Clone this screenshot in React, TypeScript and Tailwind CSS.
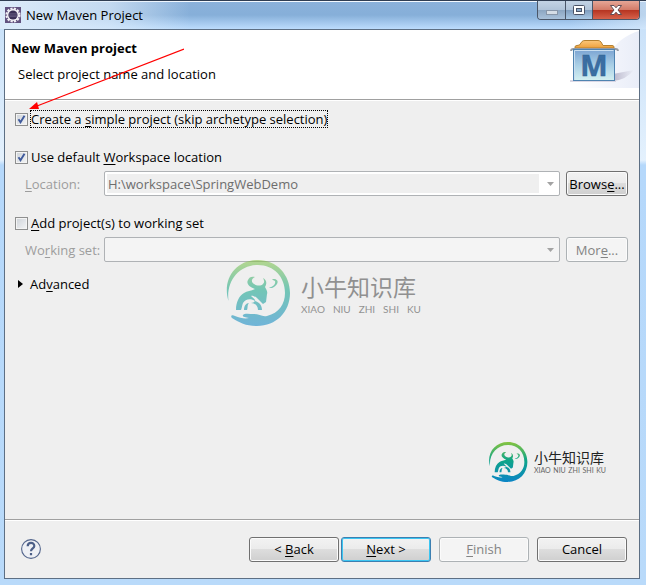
import { useState } from "react";
import type { ReactNode } from "react";

function Key({ children }: { children: ReactNode }) {
  return <span className="underline underline-offset-2">{children}</span>;
}

function EclipseIcon() {
  return (
    <svg width="16" height="16" viewBox="0 0 16 16" className="shrink-0">
      <rect width="16" height="16" fill="#62527f" />
      <circle cx="8" cy="8" r="6.5" fill="none" stroke="#f1eff5" strokeWidth="2.2" strokeDasharray="2.2 1.2" />
      <circle cx="8" cy="8" r="6" fill="#f4f2f7" />
      <circle cx="8" cy="8" r="4.6" fill="#3a2f55" />
      <path d="M4 6.800h8M3.800 8.200h8.400M4.200 9.600h7.600" stroke="#7a7196" strokeWidth="0.600" />
    </svg>
  );
}

function MavenBanner() {
  return (
    <svg width="75" height="58" viewBox="0 0 75 58" className="shrink-0">
      <defs>
        <linearGradient id="boxFill" x1="0" y1="0" x2="0" y2="1">
          <stop offset="0" stopColor="#7ba3d2" />
          <stop offset="0.5" stopColor="#a9cfe6" />
          <stop offset="1" stopColor="#d3f0f1" />
        </linearGradient>
        <linearGradient id="folderFill" x1="0" y1="0" x2="0" y2="1">
          <stop offset="0" stopColor="#fbc77a" />
          <stop offset="1" stopColor="#eda03c" />
        </linearGradient>
        <linearGradient id="bannerFill" x1="0" y1="0" x2="1" y2="0">
          <stop offset="0.1" stopColor="#ffffff" />
          <stop offset="1" stopColor="#e9edf8" />
        </linearGradient>
        <linearGradient id="shadowFill" x1="0" y1="0" x2="1" y2="0">
          <stop offset="0" stopColor="#b9b7cb" />
          <stop offset="1" stopColor="#b9b7cb" stopOpacity="0" />
        </linearGradient>
      </defs>
      <path d="M75 1C64 4 54 11 48 20C40 32 24 48 5 58H75Z" fill="url(#bannerFill)" />
      <path d="M49 51V44L70 40Q62 50 49 51Z" fill="url(#shadowFill)" />
      <path d="M6 51H52" stroke="#cfcbdc" strokeWidth="1.500" />
      <path d="M11 18V17Q11 15.500 13 15.500L15.500 15L18 11.500Q19 10.500 21 10.500H34Q36 10.500 37 12L39 15.500H48Q50 15.500 50 17V18Z" fill="url(#folderFill)" stroke="#b4802f" strokeWidth="1" />
      <path d="M7 21Q7 19 9.500 19H51.500Q54 19 54 21" fill="none" stroke="#969ba3" strokeWidth="1.800" />
      <rect x="9.500" y="19.500" width="41" height="31" fill="url(#boxFill)" stroke="#4f83b0" />
      <path d="M10.500 50V20.500H49.500" stroke="#c9def0" fill="none" />
      <text x="30" y="46" textAnchor="middle" fontFamily="Open Sans, sans-serif" fontSize="29" fontWeight="700" fill="#3a6ea3" stroke="#315f90" strokeWidth="0.500">M</text>
    </svg>
  );
}

function BullMark({ size, id }: { size: number; id: string }) {
  return (
    <svg width={size} height={size} viewBox="0 0 66 66" className="shrink-0">
      <defs>
        <linearGradient id={id} x1="0" y1="0" x2="0" y2="66" gradientUnits="userSpaceOnUse">
          <stop offset="0" stopColor="#86c440" />
          <stop offset="0.45" stopColor="#0fa587" />
          <stop offset="1" stopColor="#0a84c6" />
        </linearGradient>
      </defs>
      <g fill={`url(#${id})`}>
        <path d="M3.500 41C-3 20 10 0 33 0C52 0 65 15 65 33C65 52 51 66 32 66C21 66 15 63 7 58C5 56 7 54 10 56C15 58 20 59 24 58C20 57 17 57 18 55C19 53 25 54 29 54C34 54 37 57 42 56C54 53 60 44 60 33C60 17 49 5 33 5C14 5 1 21 3.500 41Z" />
        <path d="M11 50C11 42 14 36 19 33C22 31 26 31 30 29C24 27 21 23 23 20C24 17 27 16 30 17C26 19 26 22 29 24C32 26 36 26 38 24C40 22 39 20 38 18C42 20 42 24 40 27C41 29 43 32 42 34L41 42L38 44L33 39C30 36 27 35 26 36C29 39 31 40 30 41C26 38 20 39 18 43C17 45 17 48 16 50Z" />
        <path d="M30 41C34 42 37 45 37 50H33C33 46 30 43 26 43C28 43 29 42 30 41ZM19 50C19 46 21 43 24 43C22 45 23 48 22 50Z" />
        <path d="M44 27.500C48 27 51 24 50 21L47 19.500C51 18 54 21 52 24C50 27 47 29 44 27.500Z" />
      </g>
    </svg>
  );
}

function DropArrow() {
  return (
    <svg width="7" height="4" viewBox="0 0 7 4" className="mr-[3px] ml-2 shrink-0">
      <path d="M0 0h7L3.500 4z" fill="#a3a3a3" />
    </svg>
  );
}

const checkboxClass =
  "h-[13px] w-[13px] shrink-0 appearance-none border border-[#8e8f8f] bg-[linear-gradient(135deg,#cdd2d8,#f4f5f6)] shadow-[inset_0_0_0_1px_#f4f4f4] checked:bg-[url('data:image/svg+xml,%3Csvg%20xmlns=%22http://www.w3.org/2000/svg%22%20viewBox=%220%200%2011%2011%22%3E%3Cpath%20d=%22M2.500%205.200L4.500%208.200L8.500%201.800%22%20fill=%22none%22%20stroke=%22%233f5a9c%22%20stroke-width=%221.900%22/%3E%3C/svg%3E'),linear-gradient(135deg,#cdd2d8,#f4f5f6)]";

const buttonClass =
  "h-[25px] rounded-[3px] border text-center";
const normalButton =
  "border-[#707070] bg-[linear-gradient(#f2f2f2,#ebebeb_50%,#dddddd_50%,#cfcfcf)] shadow-[inset_0_0_0_1px_#fbfbfb] disabled:border-[#adb2b5] disabled:bg-[#f4f4f4] disabled:bg-none disabled:text-[#838383]";
const defaultButton =
  "border-[#3c7fb1] bg-[linear-gradient(#f2f2f2,#ebebeb_50%,#dddddd_50%,#cfcfcf)] shadow-[inset_0_0_0_1px_#3cc6f2]";

export default function App() {
  const [simple, setSimple] = useState(true);
  const [useDefault, setUseDefault] = useState(true);
  const [addToSet, setAddToSet] = useState(false);

  return (
    <div className="relative flex min-h-screen flex-col bg-[linear-gradient(#c4def8,#e4f1fd_160px,#b5d8fb_165px,#b9dafa)] pb-[6px] font-['Open_Sans','Noto_Sans_CJK_SC',sans-serif] text-[13px] leading-[18px] text-black">
      {/* Title bar */}
      <header className="flex h-[29px] items-start justify-between border-t border-[#2f3d52] bg-[linear-gradient(90deg,#dcebfa_0,#dcebfab0_110px,#dcebfa00_190px,#dcebfa00_88%,#dcebfaa0),linear-gradient(#f4f9ff_1px,#8bb1da_1px,#86afd9_50%,#bcdcfd)] pr-[6px] pl-[5px]">
        <div className="flex items-center gap-[5px] pt-[5px]">
          <EclipseIcon />
          <h1>New Maven Project</h1>
        </div>
        <div className="flex h-[19px] overflow-hidden rounded-b-[4px] border border-t-0 border-[#4a5668]">
          <button aria-label="Minimize" className="flex w-[28px] items-center justify-center border-r border-[#4a5668] bg-[linear-gradient(#c3d3e4,#b0c3d8_50%,#8ba5c1_50%,#a9c1da)]">
            <span className="mt-1 h-[5px] w-3 border border-[#8795a8] bg-[#d5dde6]" />
          </button>
          <button aria-label="Maximize" className="flex w-[27px] items-center justify-center border-r border-[#4a5668] bg-[linear-gradient(#c3d3e4,#b0c3d8_50%,#7f9dbe_50%,#a9c8e4)]">
            <svg width="12" height="10" viewBox="0 0 12 10">
              <rect x="0.500" y="0.500" width="11" height="9" rx="1" fill="#fff" stroke="#4a5366" />
              <rect x="3.500" y="3.500" width="5" height="3" fill="#8aa9c9" stroke="#4a5366" />
            </svg>
          </button>
          <button aria-label="Close" className="flex w-[46px] items-center justify-center bg-[linear-gradient(#e5a696,#d27a67_50%,#b53320_50%,#d6624b)]">
            <svg width="12" height="10" viewBox="0 0 12 10">
              <path d="M0.500 0.500H4L6 2.800L8 0.500H11.500L8 5L11.500 9.500H8L6 7.200L4 9.500H0.500L4 5Z" fill="#fff" stroke="#53434d" strokeWidth="0.900" />
            </svg>
          </button>
        </div>
      </header>

      <main className="mr-[6px] ml-1 flex flex-1 flex-col border border-[#5d6f84] bg-[#efefef]">
        {/* Wizard banner */}
        <section className="flex items-start justify-between border-b border-[#a0a0a0] bg-white pl-[6px]">
          <div className="pt-[9px] pb-4">
            <h2 className="font-bold">New Maven project</h2>
            <p className="mt-2 pl-[7px]">Select project name and location</p>
          </div>
          <MavenBanner />
        </section>

        <form className="flex-1 pt-[10px] pr-[11px] pl-[10px] shadow-[inset_0_1px_0_#fff]">
          <label className="flex h-[18px] items-center gap-[2px]">
            <input type="checkbox" className={checkboxClass} checked={simple} onChange={(e) => setSimple(e.target.checked)} />
            <span className="border border-dotted border-black leading-4">
              Create a <Key>s</Key>imple project (skip archetype selection)
            </span>
          </label>

          <label className="mt-5 flex h-[18px] items-center gap-[3px]">
            <input type="checkbox" className={checkboxClass} checked={useDefault} onChange={(e) => setUseDefault(e.target.checked)} />
            <span>
              Use default <Key>W</Key>orkspace location
            </span>
          </label>

          <div className="mt-[5px] flex items-center">
            <label htmlFor="location" className="w-[89px] pl-[10px] text-[#9d9d9d]">
              <Key>L</Key>ocation:
            </label>
            <div className="flex h-[25px] flex-1 items-center rounded-[2px] border border-[#afb2b5] bg-white p-[2px]">
              <select id="location" disabled={useDefault} className="h-full flex-1 appearance-none bg-[#efefef] pl-[1px] text-[#6d6d6d] opacity-100">
                <option>H:\workspace\SpringWebDemo</option>
              </select>
              <DropArrow />
            </div>
            <button type="button" className={`${buttonClass} ${normalButton} ml-[6px] w-[62px]`}>
              Brows<Key>e</Key>...
            </button>
          </div>

          <label className="mt-[18px] flex h-[18px] items-center gap-[3px]">
            <input type="checkbox" className={checkboxClass} checked={addToSet} onChange={(e) => setAddToSet(e.target.checked)} />
            <span>
              <Key>A</Key>dd project(s) to working set
            </span>
          </label>

          <div className="mt-[5px] flex items-center">
            <label htmlFor="working-set" className="w-[89px] pl-[10px] text-[#9d9d9d]">
              Wo<Key>r</Key>king set:
            </label>
            <div className="flex h-[25px] flex-1 items-center rounded-[2px] border border-[#afb2b5] bg-[#f4f4f4] p-[2px]">
              <select id="working-set" disabled={!addToSet} className="h-full flex-1 appearance-none opacity-100" />
              <DropArrow />
            </div>
            <button type="button" disabled={!addToSet} className={`${buttonClass} ${normalButton} ml-[6px] w-[62px]`}>
              Mor<Key>e</Key>...
            </button>
          </div>

          <button type="button" className="mt-[13px] flex items-center gap-[7px] pl-[3px]">
            <svg width="5" height="8" viewBox="0 0 5 8">
              <path d="M0 0L5 4L0 8Z" fill="#000" />
            </svg>
            <span>
              Ad<Key>v</Key>anced
            </span>
          </button>
        </form>

        {/* Wizard buttons */}
        <footer className="flex h-[59px] items-center border-t border-[#a0a0a0] pr-3 pl-4 shadow-[inset_0_1px_0_#fff]">
          <button aria-label="Help" className="mr-auto">
            <svg width="20" height="20" viewBox="0 0 20 20">
              <circle cx="10" cy="10" r="9.400" fill="#eef0f5" stroke="#53658c" strokeWidth="1.100" />
              <path d="M6.700 7.300C6.700 2.800 13.300 2.800 13.300 6.900C13.300 9.300 10 9.500 10 12.200M10 14V16.200" fill="none" stroke="#4c5f88" strokeWidth="2.200" />
            </svg>
          </button>
          <button className={`${buttonClass} ${normalButton} w-[90px]`}>
            &lt; <Key>B</Key>ack
          </button>
          <button className={`${buttonClass} ${defaultButton} ml-[2px] w-[90px]`}>
            <Key>N</Key>ext &gt;
          </button>
          <button disabled className={`${buttonClass} ${normalButton} ml-2 w-[90px]`}>
            <Key>F</Key>inish
          </button>
          <button className={`${buttonClass} ${normalButton} ml-2 w-[90px]`}>Cancel</button>
        </footer>
      </main>

      {/* Pointer to the first check box */}
      <svg width="155" height="62" viewBox="0 0 155 62" className="pointer-events-none absolute top-12 left-[29px]">
        <path d="M155 1L8 58" stroke="#f00" strokeWidth="1.200" />
        <path d="M0 61L8 54L10 61Z" fill="#f00" />
      </svg>

      {/* Watermarks */}
      <div className="pointer-events-none absolute inset-0 flex items-center justify-center gap-[10px] opacity-55">
        <BullMark size={66} id="bullLarge" />
        <div className="w-[120px] text-[#444]">
          <p className="text-[23px] leading-8">小牛知识库</p>
          <p className="flex justify-between font-['Lato',sans-serif] text-[10px] leading-3">
            <span>XIAO</span> <span>NIU</span> <span>ZHI</span> <span>SHI</span> <span>KU</span>
          </p>
        </div>
      </div>
      <div className="pointer-events-none absolute right-10 bottom-[103px] flex items-center gap-[6px]">
        <BullMark size={40} id="bullSmall" />
        <div className="w-[72px] text-[#222]">
          <p className="text-[14px] leading-4">小牛知识库</p>
          <p className="flex justify-between font-['Lato',sans-serif] text-[7px] leading-2 text-[#666]">
            <span>XIAO</span> <span>NIU</span> <span>ZHI</span> <span>SHI</span> <span>KU</span>
          </p>
        </div>
      </div>
    </div>
  );
}
